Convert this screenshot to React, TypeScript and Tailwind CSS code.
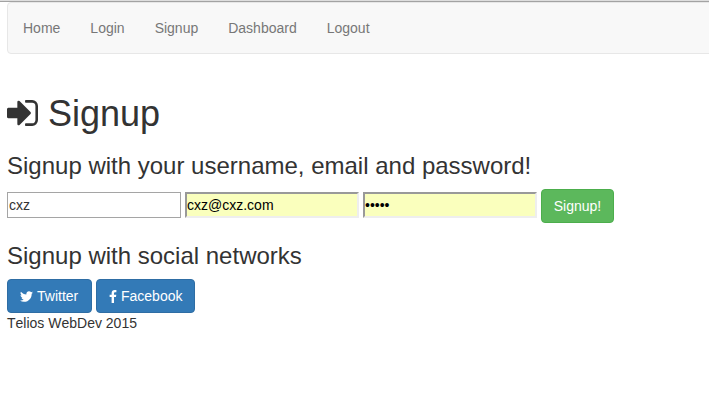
import React from 'react';
import { FaTwitter } from 'react-icons/fa';

const links = ['Home', 'Login', 'Signup', 'Dashboard', 'Logout'];

function SignIn() {
  return (
    <svg viewBox="0 0 1536 1280" className="mr-[10px] h-[26px] w-[31px] shrink-0" fill="currentColor">
      <path d="M1184 640q0 26-19 45l-544 544q-19 19-45 19t-45-19-19-45V896H64q-26 0-45-19T0 832V448q0-26 19-45t45-19h448V96q0-26 19-45t45-19 45 19l544 544q19 19 19 45zM1536 288v704q0 119-84.500 203.500T1248 1280H928q-13 0-22.500-9.500T896 1248q0-4-1-20t-.5-26.500 3-23.500 10-19.500 20.500-6.500h320q66 0 113-47t47-113V288q0-66-47-113t-113-47H936l-11.500-1-11.500-3-8-5.500-7-9-2-13.500q0-4-1-20t-.5-26.500 3-23.500 10-19.500T928 0h320q119 0 203.500 84.500T1536 288z" />
    </svg>
  );
}

function FacebookF() {
  return (
    <svg viewBox="0 0 864 1664" className="mr-[4px] h-[13px] w-[8px]" fill="currentColor">
      <path d="M864 12v264H707q-86 0-116 36t-30 108v189h293l-39 296H561v759H255V905H0V609h255V391q0-186 104-288.500T636 0q147 0 228 12z" />
    </svg>
  );
}

export default function App() {
  return (
    <div className="h-[411px] w-[709px] overflow-hidden bg-white font-['Liberation_Sans',Arial,sans-serif] text-[14px] leading-5 text-[#333]">
      <div className="h-[2px] border-b border-[#a3a3a3] bg-[#dedede]" />
      <nav className="ml-[7px] flex h-[52px] w-[720px] rounded-[4px] border border-[#e7e7e7] bg-[#f8f8f8] text-[#777]">
        {links.map((l) => (
          <a key={l} className="px-[15px] py-[15px]">{l}</a>
        ))}
      </nav>
      <main className="px-[7px]">
        <h1 className="mt-[39px] flex h-10 items-center text-[36px] leading-10"><SignIn /><span className="pt-[2px]">Signup</span></h1>
        <h3 className="mt-[20px] text-[24px] leading-[26px]">Signup with your username, email and password!</h3>
        <form className="mt-[10px] flex h-[34px] items-start gap-1 pt-[2px] text-black">
          <input className="mt-px h-[26px] w-[174px] border border-[#a5a5a5] bg-white px-px text-[#333]" defaultValue="cxz" />
          <input className="mt-px h-[26px] w-[174px] border-2 border-[#eee] border-t-[#999] border-l-[#999] bg-[#faffbd]" defaultValue="cxz@cxz.com" />
          <input type="password" className="mt-px h-[26px] w-[174px] border-2 border-[#eee] border-t-[#999] border-l-[#999] bg-[#faffbd]" defaultValue="cxzcx" />
          <button type="button" className="-mt-[2px] h-[34px] w-[73px] rounded-[4px] border border-[#4cae4c] bg-[#5cb85c] text-white">Signup!</button>
        </form>
        <h3 className="mt-[20px] text-[24px] leading-[26px]">Signup with social networks</h3>
        <div className="mt-[10px] flex gap-1 text-white">
          <a className="flex h-[34px] w-[85px] items-center rounded-[4px] border border-[#2e6da4] bg-[#337ab7] pl-3"><FaTwitter className="mr-[4px] size-[13px]" />Twitter</a>
          <a className="flex h-[34px] w-[99px] items-center rounded-[4px] border border-[#2e6da4] bg-[#337ab7] pl-3"><FacebookF />Facebook</a>
        </div>
        <p className="[font-kerning:none]">Telios WebDev 2015</p>
      </main>
    </div>
  );
}
